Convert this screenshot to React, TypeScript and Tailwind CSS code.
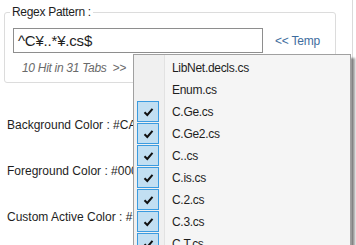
import React from "react";

type Item = { name: string; checked: boolean };

const items: Item[] = [
  { name: "LibNet.decls.cs", checked: false },
  { name: "Enum.cs", checked: false },
  { name: "C.Ge.cs", checked: true },
  { name: "C.Ge2.cs", checked: true },
  { name: "C..cs", checked: true },
  { name: "C.is.cs", checked: true },
  { name: "C.2.cs", checked: true },
  { name: "C.3.cs", checked: true },
  { name: "C.T.cs", checked: true },
];

const Check = () => (
  <svg width="11" height="10" viewBox="0 0 11 10" className="block">
    <path d="M1.5 5.2 L4.3 8 L9.5 1.8" fill="none" stroke="#111" strokeWidth="2" />
  </svg>
);

const TabMenu: React.FC = () => (
  <div className="absolute left-[133px] top-[54px] w-[218px] h-[220px] border border-[#a0a0a0] pt-[2px] shadow-[4px_4px_2px_rgba(0,0,0,0.4)] bg-[linear-gradient(to_right,#f0f0f0_0,#f0f0f0_30px,#e2e2e2_30px,#e2e2e2_31px,#f5f5f5_31px)]">
    {items.map((it) => (
      <div key={it.name} className="flex h-[22px] items-start">
        <div className="w-[31px] pl-[3px]">
          {it.checked && (
            <div className="w-[22px] h-[21px] border border-[#3a9be0] bg-[#c2dff2] flex items-center justify-center">
              <Check />
            </div>
          )}
        </div>
        <span className="pl-[7px] h-[22px] leading-[22px] text-[12px] tracking-[-0.3px] text-[#1e1e1e]">
          {it.name}
        </span>
      </div>
    ))}
  </div>
);

export default function App() {
  return (
    <div className="relative w-[356px] h-[245px] overflow-hidden bg-white font-['Liberation_Sans',sans-serif] text-[#1e1e1e]">
      <div className="w-[353px] h-full border-r border-[#dadada] pl-[4px] pt-[4px]">
        <fieldset className="w-[332px] border border-[#dcdcdc] rounded-[3px]">
          <legend className="ml-[5px] px-[2px] text-[12px] leading-[16px] tracking-[-0.3px]">
            Regex Pattern :
          </legend>
          <div className="flex items-center mt-[8px] ml-[8px]">
            <div className="w-[250px] h-[25px] border border-[#8e8e8e] pl-[4px] text-[15px] leading-[23px] tracking-[-0.2px]">
              ^C¥..*¥.cs$
            </div>
            <span className="ml-[12px] text-[12px] tracking-[-0.2px] text-[#3e6d9e]">
              &lt;&lt; Temp
            </span>
          </div>
          <div className="h-[29px] flex items-center ml-[17px] italic text-[12px] tracking-[-0.3px] text-[#6a6a6a] whitespace-pre">
            10 Hit in 31 Tabs  &gt;&gt;
          </div>
        </fieldset>
        <div className="mt-[19px] pl-[3px] text-[12px] whitespace-nowrap">
          <div className="h-[46px] flex items-center">Background Color : #CAE1F0</div>
          <div className="h-[46px] flex items-center">Foreground Color : #000000</div>
          <div className="h-[46px] flex items-center">
            Custom Active Color : #<span className="text-[#f0901a]">FF9020</span>
          </div>
        </div>
      </div>
      <TabMenu />
    </div>
  );
}
